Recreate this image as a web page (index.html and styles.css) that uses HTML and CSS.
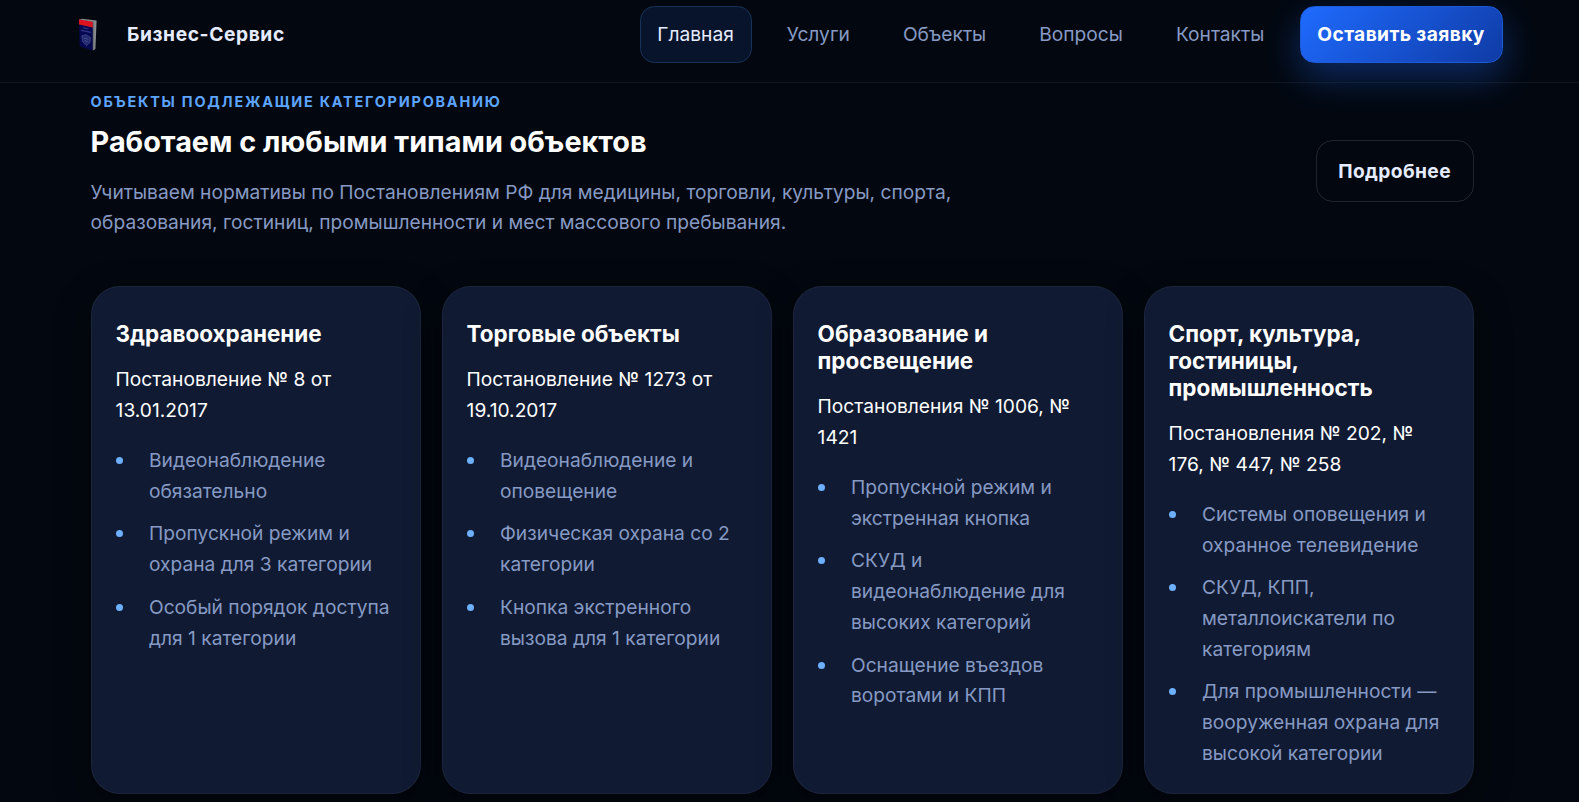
FILE: index.html
```html
<!DOCTYPE html>
<html lang="ru">
<head>
    <meta charset="UTF-8">
    <meta name="viewport" content="width=device-width, initial-scale=1.0">
    <title>Бизнес-Сервис</title>
    <link rel="stylesheet" href="styles.css">
</head>
<body>
    <header class="header">
        <a class="brand" href="#">
            <svg class="brand-logo" width="20" height="34" viewBox="0 0 20 34">
                <path d="M1 1.2 L14.8 3.4 L14.8 32.6 L1.6 28.2 Z" fill="#070950"/>
                <path d="M1 1.2 L14.8 3.4 L14.8 9.4 L1 6.4 Z" fill="#dc1420"/>
                <path d="M1 1.2 L4 .8 L18.6 2.6 L14.8 3.8 Z" fill="#8d8d92"/>
                <path d="M14.8 3.6 L18.6 2.6 L17.4 31 L14.8 32.6 Z" fill="#8b8c90"/>
                <path d="M15.6 4.6 L15.8 31.4" stroke="#5b5c62" stroke-width=".7"/>
                <path d="M5 9.8 L10.5 11 M2.8 12.2 L13 14.4" stroke="#333a8c" stroke-width="1.1"/>
                <path d="M3.8 17.8 L8 16.8 L12.4 19.4 L12 24.4 L8.4 27.6 L4.6 23.6 Z" fill="#232a70" stroke="#414987" stroke-width=".8"/>
                <path d="M5.8 20 L10.4 21.2 M6.6 22.6 L9.8 23.6" stroke="#4d558f" stroke-width=".8"/>
            </svg>
            <span class="brand-name">Бизнес-Сервис</span>
        </a>
        <nav class="nav">
            <a class="nav-link active" href="#">Главная</a>
            <a class="nav-link" href="#">Услуги</a>
            <a class="nav-link" href="#">Объекты</a>
            <a class="nav-link" href="#">Вопросы</a>
            <a class="nav-link" href="#">Контакты</a>
            <a class="nav-link cta" href="#">Оставить заявку</a>
        </nav>
    </header>

    <main class="container">
        <div class="section-head">
            <div>
                <div class="eyebrow">Объекты подлежащие категорированию</div>
                <h2>Работаем с любыми типами объектов</h2>
                <p class="lead">Учитываем нормативы по Постановлениям РФ для медицины, торговли, культуры, спорта, образования, гостиниц, промышленности и мест массового пребывания.</p>
            </div>
            <a class="btn-outline" href="#">Подробнее</a>
        </div>

        <div class="cards">
            <article class="card">
                <h3>Здравоохранение</h3>
                <p>Постановление № 8 от 13.01.2017</p>
                <ul>
                    <li>Видеонаблюдение обязательно</li>
                    <li>Пропускной режим и охрана для 3 категории</li>
                    <li>Особый порядок доступа для 1 категории</li>
                </ul>
            </article>
            <article class="card">
                <h3>Торговые объекты</h3>
                <p>Постановление № 1273 от 19.10.2017</p>
                <ul>
                    <li>Видеонаблюдение и оповещение</li>
                    <li>Физическая охрана со 2 категории</li>
                    <li>Кнопка экстренного вызова для 1 категории</li>
                </ul>
            </article>
            <article class="card">
                <h3>Образование и просвещение</h3>
                <p>Постановления № 1006, № 1421</p>
                <ul>
                    <li>Пропускной режим и экстренная кнопка</li>
                    <li>СКУД и видеонаблюдение для высоких категорий</li>
                    <li>Оснащение въездов воротами и КПП</li>
                </ul>
            </article>
            <article class="card">
                <h3>Спорт, культура, гостиницы, промышленность</h3>
                <p>Постановления № 202, № 176, № 447, № 258</p>
                <ul>
                    <li>Системы оповещения и охранное телевидение</li>
                    <li>СКУД, КПП, металлоискатели по категориям</li>
                    <li>Для промышленности — вооруженная охрана для высокой категории</li>
                </ul>
            </article>
        </div>
    </main>
</body>
</html>
```
FILE: styles.css
```css
:root {
    --bg: #030810;
    --card: #101a32;
    --text: #e6ecff;
    --muted: #879ac4;
    --accent: #5ea5ff;
}
* {
    box-sizing: border-box;
}
body {
    margin: 0;
    height: 100vh;
    overflow: hidden;
    font-family: Inter, sans-serif;
    font-size: 19.2px;
    line-height: 1.6;
    color: #fff;
    background: var(--bg);
}
a {
    color: inherit;
    text-decoration: none;
}
.header {
    position: relative;
    display: flex;
    justify-content: space-between;
    align-items: center;
    height: 83px;
    padding: 6px 76.4px 19px 76px;
    border-bottom: 1px solid rgba(255, 255, 255, 0.06);
}
.brand {
    display: flex;
    align-items: center;
    gap: 29px;
    padding-left: 2px;
    color: var(--text);
}
.brand-logo {
    display: block;
}
.brand-name {
    font-weight: 700;
    letter-spacing: 0.6px;
}
.nav {
    display: flex;
    gap: 17.4px;
}
.nav-link {
    padding: 12px 16.8px;
    border: 1px solid transparent;
    border-radius: 14.4px;
    line-height: 31px;
    color: var(--muted);
}
.nav-link.active {
    color: var(--text);
    background: #08142b;
    border-color: #1a3158;
}
.nav-link.cta {
    color: #fff;
    font-weight: 700;
    letter-spacing: 0.384px;
    background: linear-gradient(135deg, #1f6bff, #0f3ba5);
    border-color: #1d5bd8;
    box-shadow: 0 14px 36px rgba(31, 107, 255, 0.35);
}
.container {
    width: 1383px;
    margin: 0 0 0 90.6px;
    padding-top: 7px;
}
.section-head {
    display: flex;
    justify-content: space-between;
    align-items: center;
    margin-bottom: 34px;
}
.eyebrow {
    font-size: 14.4px;
    font-weight: 700;
    letter-spacing: 1.8px;
    text-transform: uppercase;
    color: var(--accent);
}
h2 {
    margin: 12px 0 17px;
    font-size: 28.8px;
    line-height: 1.2;
}
.lead {
    max-width: 870px;
    margin: 0 0 14px;
    color: var(--muted);
}
.btn-outline {
    padding: 14.4px 21.6px;
    border: 1px solid rgba(255, 255, 255, 0.12);
    border-radius: 16.8px;
    font-weight: 700;
    letter-spacing: 0.384px;
    color: var(--text);
}
.cards {
    display: grid;
    grid-template-columns: repeat(4, 1fr);
    gap: 21px;
}
.card {
    padding: 24px;
    border: 1px solid rgba(255, 255, 255, 0.05);
    border-radius: 28.8px;
    background: var(--card);
    box-shadow: 0 12px 36px rgba(0, 0, 0, 0.45);
}
.card h3 {
    margin: 9.6px 0 16.6px;
    font-size: 22.46px;
    line-height: 1.2;
}
.card p {
    margin: 0 0 19.4px;
}
.card ul {
    display: grid;
    gap: 12px;
    margin: 0;
    padding: 0;
    list-style: none;
    color: var(--muted);
}
.card li {
    display: flex;
    gap: 26.4px;
}
.card li::before {
    content: "";
    flex: none;
    width: 7px;
    height: 7px;
    margin-top: 12px;
    border-radius: 50%;
    background: #6cb0ff;
}
```
